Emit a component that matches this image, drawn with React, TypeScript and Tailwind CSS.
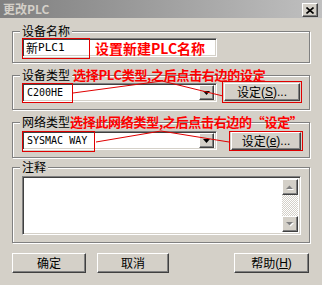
import React from "react";

const raised =
  "bg-[#d4d0c8] border border-t-white border-l-white border-r-[#404040] border-b-[#404040] shadow-[inset_-1px_-1px_0_#808080]";
const sunken =
  "bg-white border border-t-[#808080] border-l-[#808080] border-r-white border-b-white shadow-[inset_1px_1px_0_#404040,inset_-1px_-1px_0_#d4d0c8]";
const etched =
  "border border-[#808080] shadow-[inset_1px_1px_0_#fff,1px_1px_0_#fff]";

const cjk = { fontFamily: '"Noto Sans CJK SC", "Liberation Sans", sans-serif' };
const mono = { fontFamily: '"DejaVu Sans Mono", "Liberation Mono", monospace' };

function GroupLabel({ children }: { children: React.ReactNode }) {
  return (
    <span className="absolute left-[7px] top-[-8px] bg-[#d4d0c8] px-[2px] text-[12px] leading-[14px] text-black">
      {children}
    </span>
  );
}

function DropArrow() {
  return (
    <div className={`${raised} w-[15px] h-[15px] flex items-center justify-center`}>
      <svg width="7" height="4" viewBox="0 0 7 4">
        <path d="M0 0h7L3.5 4z" fill="#000" />
      </svg>
    </div>
  );
}

function Combo({ text }: { text: string }) {
  return (
    <div className={`${sunken} w-[195px] h-[19px] flex items-center justify-between pl-[4px] pr-[2px]`}>
      <span className="text-[10px] leading-[12px] text-black" style={mono}>
        {text}
      </span>
      <DropArrow />
    </div>
  );
}

function ScrollArrow({ up }: { up?: boolean }) {
  return (
    <div className={`${raised} w-[16px] h-[16px] flex items-center justify-center`}>
      <svg width="8" height="5" viewBox="0 0 8 5">
        {up ? (
          <>
            <path d="M1 5h7L4.5 1.5z" fill="#fff" />
            <path d="M0 4h7L3.5 0.5z" fill="#808080" />
          </>
        ) : (
          <>
            <path d="M1 1h7L4.5 4.5z" fill="#fff" />
            <path d="M0 0h7L3.5 3.5z" fill="#808080" />
          </>
        )}
      </svg>
    </div>
  );
}

export default function App() {
  return (
    <div
      className="relative w-[322px] h-[285px] bg-[#d4d0c8] overflow-hidden text-black"
      style={cjk}
    >
      {/* Title bar */}
      <div className="h-[18px] flex items-center justify-between pl-[3px] pr-[4px] bg-linear-to-r from-[#808080] to-[#c0c0c0]">
        <span className="text-[12px] leading-[14px] font-bold text-[#d4d0c8]">更改PLC</span>
        <div className={`${raised} w-[16px] h-[14px] flex items-center justify-center mt-[2px]`}>
          <svg width="8" height="7" viewBox="0 0 8 7">
            <path d="M0.5 0.5l7 6M7.5 0.5l-7 6" stroke="#000" strokeWidth="1.6" />
          </svg>
        </div>
      </div>

      <div className="pl-[12px] w-[310px]">
        {/* Group 1 */}
        <div className={`${etched} relative mt-[13px] h-[32px] pt-[6px] pl-[9px]`}>
          <GroupLabel>设备名称</GroupLabel>
          <div className={`${sunken} relative w-[195px] h-[19px] flex items-center pl-[3px]`}>
            <span className="text-[12px] leading-[14px]">新</span>
            <span className="text-[11px] leading-[14px]" style={mono}>
              PLC1
            </span>
            <span className="absolute left-[72px] top-[1px] text-[14px] leading-[16px] font-bold text-[#ff0000]">
              设置新建PLC名称
            </span>
            <div className="absolute left-[-1px] top-[-1px] w-[68px] h-[21px] border border-[#e00000]" />
          </div>
        </div>

        {/* Group 2 */}
        <div className={`${etched} relative mt-[12px] h-[35px] pt-[7px] pl-[9px] flex items-start`}>
          <GroupLabel>设备类型</GroupLabel>
          <span className="absolute left-[60px] top-[-9px] text-[13px] leading-[16px] font-bold text-[#ff0000] whitespace-nowrap tracking-[-0.3px]">
            选择PLC类型,之后点击右边的设定
          </span>
          <div className="relative">
            <Combo text="C200HE" />
            <div className="absolute left-[0px] top-[0px] w-[51px] h-[20px] border border-[#e00000]" />
          </div>
          <div className="relative ml-[7px]">
            <div className={`${raised} w-[76px] h-[18px] flex items-center justify-center text-[12px] leading-[14px]`}>
              设定<span style={{ fontFamily: '"Liberation Sans", sans-serif' }}>(<u>S</u>)...</span>
            </div>
            <div className="absolute left-[-2px] top-[-2px] w-[80px] h-[22px] border border-[#e00000]" />
          </div>
        </div>

        {/* Group 3 */}
        <div className={`${etched} relative mt-[12px] h-[36px] pt-[8px] pl-[9px] flex items-start`}>
          <GroupLabel>网络类型</GroupLabel>
          <span className="absolute left-[57px] top-[-9px] text-[13px] leading-[16px] font-bold text-[#ff0000] whitespace-nowrap tracking-[-0.3px]">
            选择此网络类型,之后点击右边的“设定”
          </span>
          <div className="relative">
            <Combo text="SYSMAC WAY" />
            <div className="absolute left-[0px] top-[0px] w-[73px] h-[21px] border border-[#e00000]" />
          </div>
          <div className="relative ml-[14px] mt-[1px]">
            <div className={`${raised} w-[70px] h-[18px] flex items-center justify-center text-[12px] leading-[14px]`}>
              设定<span style={{ fontFamily: '"Liberation Sans", sans-serif' }}>(<u>e</u>)...</span>
            </div>
            <div className="absolute left-[-2px] top-[-1px] w-[74px] h-[20px] border border-[#e00000]" />
          </div>
        </div>

        {/* Group 4 */}
        <div className={`${etched} relative mt-[9px] h-[76px] pt-[8px] pl-[9px]`}>
          <GroupLabel>注释</GroupLabel>
          <div className={`${sunken} w-[279px] h-[59px] flex justify-end p-[2px] pl-0`}>
            <div className="w-[16px] h-full flex flex-col">
              <ScrollArrow up />
              <div className="flex-1 bg-[image:repeating-conic-gradient(#ffffff_0_25%,#d4d0c8_0_50%)] bg-[length:2px_2px]" />
              <ScrollArrow />
            </div>
          </div>
        </div>

        {/* Buttons */}
        <div className="mt-[10px] flex items-start text-[12px] leading-[14px]">
          <div className={`${raised} w-[74px] h-[20px] flex items-center justify-center`}>确定</div>
          <div className={`${raised} w-[72px] h-[20px] flex items-center justify-center ml-[11px]`}>取消</div>
          <div className={`${raised} w-[75px] h-[20px] flex items-center justify-center ml-auto mr-[1px]`}>
            帮助<span style={{ fontFamily: '"Liberation Sans", sans-serif' }}>(<u>H</u>)</span>
          </div>
        </div>
      </div>

      {/* Annotation lines */}
      <svg className="absolute inset-0 pointer-events-none" width="322" height="285">
        <polyline points="73,93 162,81 223,96" fill="none" stroke="#e00000" strokeWidth="1" />
        <polyline points="96,142 161,131 229,142" fill="none" stroke="#e00000" strokeWidth="1" />
      </svg>
    </div>
  );
}
